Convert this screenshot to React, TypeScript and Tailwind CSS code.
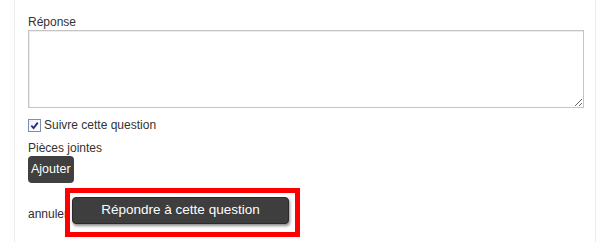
export default function App() {
  return (
    <div className="h-[242px] w-[601px] overflow-hidden bg-white font-['Liberation_Sans',Arial,sans-serif] text-[12px] text-[#333]">
      <div className="ml-[14px] mr-[5px] h-full border-x border-[#ececec] pl-[13px] pr-[11px] pt-[15px]">
        {/* Réponse */}
        <label className="block leading-[14px] mb-[1px]">Réponse</label>
        <textarea className="block h-[78px] w-full resize border border-[#c4c4c4] bg-white shadow-[inset_1px_1px_1px_rgba(0,0,0,0.08)] outline-none" />

        {/* Suivre */}
        <div className="mt-[9px] flex items-center gap-[3px] leading-[16px]">
          <span className="flex h-[13px] w-[13px] items-center justify-center border border-[#7a8fb5] bg-gradient-to-br from-[#eef2f8] to-white">
            <svg viewBox="0 0 10 10" className="h-[9px] w-[9px]">
              <path d="M1.5 5.2 L4 7.8 L8.6 1.8" fill="none" stroke="#1c2a8a" strokeWidth="2" />
            </svg>
          </span>
          <span>Suivre cette question</span>
        </div>

        {/* Pièces jointes */}
        <div className="mt-[8px] leading-[14px]">Pièces jointes</div>
        <button className="mt-[1px] block h-[27px] rounded-[4px] bg-[#404040] px-[3px] text-[12.5px] text-white">
          Ajouter
        </button>

        {/* actions */}
        <div className="mt-[5px] flex items-center">
          <a className="w-[37px] whitespace-nowrap pt-[2px] text-[#2e2a3a]">annuler</a>
          <div className="relative z-10 border-[5px] border-[#ff0000] bg-white pb-[8px] pl-[2px] pr-[6px] pt-[4px]">
            <button className="h-[27px] w-[217px] rounded-[4px] border border-[#2a2a2a] bg-[#3e3e3e] text-[13.5px] text-white shadow-[1px_2px_3px_rgba(0,0,0,0.45)]">
              Répondre à cette question
            </button>
          </div>
        </div>
      </div>
    </div>
  );
}
